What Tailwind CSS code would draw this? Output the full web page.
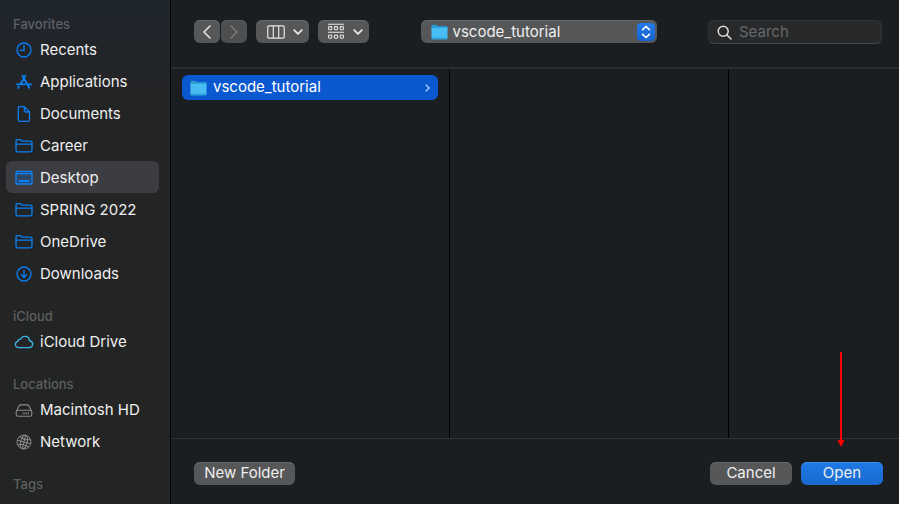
<!DOCTYPE html>
<html lang="en">
<head>
<meta charset="utf-8">
<meta name="viewport" content="width=device-width, initial-scale=1">
<title>Open</title>
<script src="https://cdn.jsdelivr.net/npm/@tailwindcss/browser@4"></script>
</head>
<body class="flex min-h-screen flex-col bg-white pb-px font-['Inter','Liberation_Sans',sans-serif] text-[15px]">
<svg class="hidden" aria-hidden="true">
  <symbol id="folder" viewBox="0 0 18 16"><path d="M1 3.2C1 2.3 1.6 1.7 2.5 1.7H5.6L7.2 3.2H15.5C16.4 3.2 17 3.8 17 4.7V12.3C17 13.2 16.4 13.8 15.5 13.8H2.5C1.6 13.8 1 13.2 1 12.3ZM1 6.2H17" fill="none" stroke="currentColor" stroke-width="1.3" stroke-linejoin="round"/></symbol>
  <symbol id="folder-solid" viewBox="0 0 17 16"><path d="M.5 2Q.5.8 1.7.8H5.3L6.8 2.1H15.4Q16.5 2.1 16.5 3.2V6H.5Z" fill="#2699cf"/><path d="M.5 3.8H16.5V14Q16.5 15.2 15.3 15.2H1.7Q.5 15.2.5 14Z" fill="#48bdf3"/><path d="M.5 13.4H16.5V14Q16.5 15.2 15.3 15.2H1.7Q.5 15.2.5 14Z" fill="#2fa5df"/></symbol>
  <symbol id="down" viewBox="0 0 10 6"><path d="M1.2 1.2L5 4.8L8.8 1.2" fill="none" stroke="currentColor" stroke-width="1.8" stroke-linecap="round" stroke-linejoin="round"/></symbol>
</svg>
<div class="flex flex-1 bg-[#1b1e20] text-[#efefef]">
  <nav aria-label="Sidebar" class="w-[171px] shrink-0 border-r border-black bg-[#232425] bg-linear-to-b from-[#20262e] via-[#232425] via-20% to-[#232524] px-1.5 pt-[15px]">
    <h2 class="pl-[7px] text-[13px] leading-[18px] font-medium text-[#5d6165]">Favorites</h2>
    <ul>
      <li><a href="#" class="flex h-8 items-center gap-[7px] pt-0.5 pl-[9px]"><svg class="size-[18px] text-[#0a7ff5]" viewBox="0 0 18 18" fill="none" stroke="currentColor" stroke-width="1.3" stroke-linecap="round"><circle cx="9" cy="9" r="7"/><path d="M9 4.6V9.3H5"/></svg>Recents</a></li>
      <li><a href="#" class="flex h-8 items-center gap-[7px] pt-0.5 pl-[9px]"><svg class="size-[18px] text-[#0a7ff5]" viewBox="0 0 18 18" fill="none" stroke="currentColor" stroke-width="1.9" stroke-linecap="round"><path d="M7.4 2.8L14.3 14.8M10.4 2.8L5.4 11.3M3.8 13.9L3.3 14.8M2 11.4H10M13 11.4H16"/></svg>Applications</a></li>
      <li><a href="#" class="flex h-8 items-center gap-[7px] pt-0.5 pl-[9px]"><svg class="size-[18px] text-[#0a7ff5]" viewBox="0 0 18 18" fill="none" stroke="currentColor" stroke-width="1.3" stroke-linejoin="round"><path d="M9.3 1.7H4.8Q3.3 1.7 3.3 3.2V14.8Q3.3 16.3 4.8 16.3H13Q14.5 16.3 14.5 14.8V7ZM9.3 1.7V5.5Q9.3 7 10.8 7H14.5"/></svg>Documents</a></li>
      <li><a href="#" class="flex h-8 items-center gap-[7px] pt-0.5 pl-[9px]"><svg class="h-4 w-[18px] text-[#0a7ff5]"><use href="#folder"/></svg>Career</a></li>
      <li><a href="#" aria-current="page" class="mr-[5px] flex h-8 items-center gap-[7px] rounded-md bg-[#3c3d42] pt-0.5 pl-[9px]"><svg class="size-[18px] text-[#0a84ff]" viewBox="0 0 18 18" fill="none" stroke="currentColor" stroke-width="1.3"><rect x="1" y="2.4" width="16" height="12.6" rx="1.5" fill="#2b4867"/><path d="M1 4.6H17"/><rect x="4" y="11.2" width="10" height="1.6" fill="currentColor" stroke-width=".5"/></svg>Desktop</a></li>
      <li><a href="#" class="flex h-8 items-center gap-[7px] pt-0.5 pl-[9px]"><svg class="h-4 w-[18px] text-[#0a7ff5]"><use href="#folder"/></svg>SPRING 2022</a></li>
      <li><a href="#" class="flex h-8 items-center gap-[7px] pt-0.5 pl-[9px]"><svg class="h-4 w-[18px] text-[#0a7ff5]"><use href="#folder"/></svg>OneDrive</a></li>
      <li><a href="#" class="flex h-8 items-center gap-[7px] pt-0.5 pl-[9px]"><svg class="size-[18px] text-[#0a7ff5]" viewBox="0 0 18 18" fill="none" stroke="currentColor" stroke-width="1.3" stroke-linecap="round" stroke-linejoin="round"><circle cx="9" cy="9" r="7"/><path d="M9 5.3V12.3M6.3 9.8L9 12.5L11.7 9.8"/></svg>Downloads</a></li>
    </ul>
    <h2 class="mt-[18px] pl-[7px] text-[13px] leading-[18px] font-medium text-[#5d5f60]">iCloud</h2>
    <ul>
      <li><a href="#" class="flex h-8 items-center gap-[7px] pt-0.5 pl-[9px]"><svg class="size-[18px] overflow-visible text-[#3cb4e6]" viewBox="0 0 18 18" fill="none" stroke="currentColor" stroke-width="1.3"><path d="M4 14.6C1.9 14.6.4 13.3.4 11.4C.4 9.8 1.5 8.7 2.9 8.4C2.9 6.8 4.2 5.8 5.7 6.1C6.5 4.3 8.1 3.3 9.9 3.3C12.5 3.3 14.3 5.1 14.5 7.6C16.4 7.9 17.6 9.3 17.6 11.1C17.6 13.1 16.1 14.6 14 14.6Z"/></svg>iCloud Drive</a></li>
    </ul>
    <h2 class="mt-[18px] pl-[7px] text-[13px] leading-[18px] font-medium text-[#5d5f60]">Locations</h2>
    <ul>
      <li><a href="#" class="flex h-8 items-center gap-[7px] pt-0.5 pl-[9px]"><svg class="size-[18px] text-[#88898a]" viewBox="0 0 18 18" fill="none" stroke="currentColor" stroke-width="1.1" stroke-linejoin="round"><path d="M1.4 10.3L4 4.9Q4.5 3.9 5.6 3.9H12.4Q13.5 3.9 14 4.9L16.6 10.3"/><rect x="1.2" y="9.3" width="15.6" height="5.9" rx="1.8"/><path d="M7.5 12.3H14.2" stroke-width="1.8" stroke-dasharray="1.1 .7"/></svg>Macintosh HD</a></li>
      <li><a href="#" class="flex h-8 items-center gap-[7px] pt-0.5 pl-[9px]"><svg class="size-[18px] text-[#88898a]" viewBox="0 0 18 18" fill="none" stroke="currentColor" stroke-width="1"><circle cx="9" cy="9" r="7"/><g transform="rotate(14 9 9)"><ellipse cx="9" cy="9" rx="3.3" ry="7"/><path d="M9 2V16M2 9H16M3.4 5Q9 7.6 14.6 5M3.4 13Q9 10.4 14.6 13"/></g></svg>Network</a></li>
    </ul>
    <h2 class="mt-[18px] pl-[7px] text-[13px] leading-[18px] font-medium text-[#5d5f60]">Tags</h2>
  </nav>

  <main class="flex min-w-0 flex-1 flex-col">
    <header class="flex items-start justify-between border-b-2 border-[#2a2d2f] pt-5 pr-[17px] pb-[23px] pl-[23px]">
      <div class="flex">
        <button aria-label="Back" class="flex h-[23px] w-[26px] items-center justify-center rounded-md bg-[#565759] shadow-[inset_0_1px_0_#67686a]"><svg class="h-3.5 w-2" viewBox="0 0 8 14" fill="none" stroke="#e6e6e6" stroke-width="1.5" stroke-linecap="round" stroke-linejoin="round"><path d="M7 1L1 7L7 13"/></svg></button>
        <button aria-label="Forward" disabled class="ml-px flex h-[23px] w-[26px] items-center justify-center rounded-md bg-[#4e4f51] shadow-[inset_0_1px_0_#5c5d5f]"><svg class="h-3.5 w-2" viewBox="0 0 8 14" fill="none" stroke="#808183" stroke-width="1.3" stroke-linecap="round" stroke-linejoin="round"><path d="M1 1L7 7L1 13"/></svg></button>
        <button aria-label="Column view" class="ml-[9px] flex h-[23px] w-[53px] items-center justify-center gap-2 rounded-md bg-[#565759] pl-1 text-[#e6e6e6] shadow-[inset_0_1px_0_#67686a]"><svg class="h-3.5 w-[18px]" viewBox="0 0 18 14" fill="none" stroke="currentColor" stroke-width="1.2"><rect x=".8" y=".8" width="16.4" height="12.4" rx="1.2"/><path d="M6.3 1V13M11.7 1V13"/></svg><svg class="h-1.5 w-2.5"><use href="#down"/></svg></button>
        <button aria-label="Group items" class="ml-[9px] flex h-[23px] w-[51px] items-center justify-center gap-2 rounded-md bg-[#565759] pl-0.5 text-[#e6e6e6] shadow-[inset_0_1px_0_#67686a]"><svg class="h-[17px] w-[18px]" viewBox="0 0 18 17" fill="none" stroke="currentColor" stroke-width="1.1"><path d="M1 1.2H17M1 9.2H17"/><rect x="1.6" y="3.6" width="3.2" height="3.2" rx=".9"/><rect x="7.4" y="3.6" width="3.2" height="3.2" rx=".9"/><rect x="13.2" y="3.6" width="3.2" height="3.2" rx=".9"/><rect x="1.6" y="12" width="3.2" height="3.2" rx=".9"/><rect x="7.4" y="12" width="3.2" height="3.2" rx=".9"/><rect x="13.2" y="12" width="3.2" height="3.2" rx=".9"/></svg><svg class="h-1.5 w-2.5"><use href="#down"/></svg></button>
      </div>
      <div class="relative w-[236px]">
        <select aria-label="Location" class="block h-[23px] w-full appearance-none rounded-md bg-[#565759] pr-7 pl-8 leading-[22px] text-[#efefef] shadow-[inset_0_1px_0_#67686a]"><option>vscode_tutorial</option></select>
        <svg class="pointer-events-none absolute top-1 left-2.5 h-4 w-[17px]"><use href="#folder-solid"/></svg>
        <span class="pointer-events-none absolute top-[3px] right-0.5 flex size-[18px] items-center justify-center rounded bg-linear-to-b from-[#237ce8] to-[#1763cc]"><svg class="h-3.5 w-2.5" viewBox="0 0 10 14" fill="none" stroke="#fff" stroke-width="1.7" stroke-linecap="round" stroke-linejoin="round"><path d="M1.6 4.7L5 1.5L8.4 4.7M1.6 9.3L5 12.5L8.4 9.3"/></svg></span>
      </div>
      <label class="flex h-6 w-[174px] items-center gap-[7px] rounded-md border border-[#303234] border-b-[#434547] bg-[#28292b] pl-2">
        <svg class="size-[15px] shrink-0" viewBox="0 0 15 15" fill="none" stroke="#dcdcdc" stroke-width="1.5" stroke-linecap="round"><circle cx="6.2" cy="6.2" r="5"/><path d="M9.9 9.9L14 14"/></svg>
        <input type="search" aria-label="Search" placeholder="Search" class="w-full min-w-0 bg-transparent outline-none placeholder:text-[#66686a]">
      </label>
    </header>

    <div class="grid flex-1 grid-cols-[279fr_279fr_170fr]">
      <ul class="border-r border-black px-[11px] pt-1.5">
        <li><a href="#" class="flex h-[25px] items-center gap-1.5 rounded-md bg-[#0a58d0] pr-2 pl-2 text-white"><svg class="h-4 w-[17px]"><use href="#folder-solid"/></svg><span class="flex-1">vscode_tutorial</span><svg class="h-2 w-[5px]" viewBox="0 0 5 8" fill="none" stroke="#c8dcf8" stroke-width="1.2"><path d="M.8.6L4.2 4L.8 7.4"/></svg></a></li>
      </ul>
      <div class="border-r border-black"></div>
      <div></div>
    </div>

    <footer class="flex items-start gap-[9px] border-t border-[#333638] pt-[23px] pr-4 pb-[19px] pl-[23px]">
      <button class="mr-auto h-[23px] w-[101px] rounded-md bg-[#565759] pb-0.5 leading-[21px] shadow-[inset_0_1px_0_#67686a]">New Folder</button>
      <button class="h-[23px] w-[82px] rounded-md bg-[#565759] pb-0.5 leading-[21px] shadow-[inset_0_1px_0_#67686a]">Cancel</button>
      <div class="relative">
        <button class="block h-[23px] w-[82px] rounded-md bg-linear-to-b from-[#1e7ae6] to-[#1a69cd] pb-0.5 leading-[21px] shadow-[inset_0_1px_0_#3b8eed]">Open</button>
        <svg class="pointer-events-none absolute bottom-[38px] left-9 h-[95px] w-[8px]" viewBox="0 0 8 95" fill="#f00" aria-hidden="true"><path d="M3 0H5V88H7.5L4 95L.5 88H3Z"/></svg>
      </div>
    </footer>
  </main>
</div>
</body>
</html>
